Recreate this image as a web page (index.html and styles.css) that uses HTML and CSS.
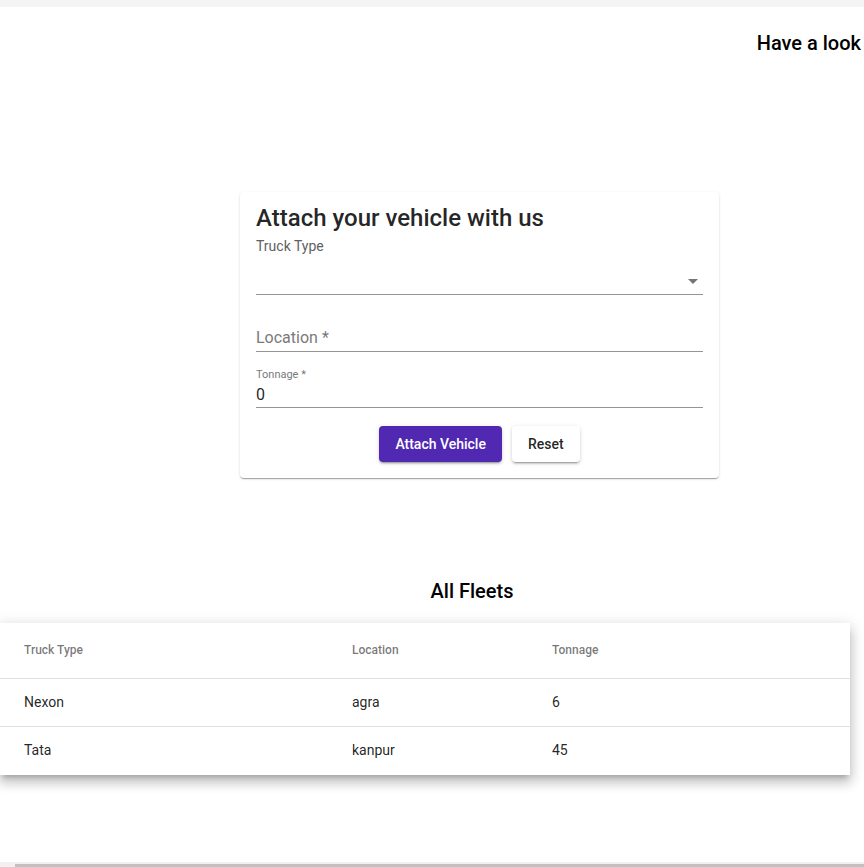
FILE: index.html
```html
<!DOCTYPE html>
<html lang="en">
<head>
<meta charset="utf-8">
<title>Fleets</title>
<link rel="stylesheet" href="styles.css">
</head>
<body>
<div class="page">
  <div class="topbar"></div>
  <h2 class="look">Have a look</h2>

  <form class="card">
    <h1 class="card-title">Attach your vehicle with us</h1>

    <div class="field select-field">
      <label class="select-label">Truck Type</label>
      <div class="select-box">
        <span class="select-value"></span>
        <span class="arrow"></span>
      </div>
    </div>

    <div class="field text-field">
      <span class="placeholder">Location *</span>
    </div>

    <div class="field float-field">
      <span class="float-label">Tonnage *</span>
      <span class="value">0</span>
    </div>

    <div class="actions">
      <button type="button" class="btn btn-primary">Attach Vehicle</button>
      <button type="button" class="btn btn-plain">Reset</button>
    </div>
  </form>

  <h2 class="fleets-title">All Fleets</h2>

  <div class="table">
    <div class="row head">
      <div>Truck Type</div>
      <div>Location</div>
      <div>Tonnage</div>
    </div>
    <div class="row">
      <div>Nexon</div>
      <div>agra</div>
      <div>6</div>
    </div>
    <div class="row">
      <div>Tata</div>
      <div>kanpur</div>
      <div>45</div>
    </div>
  </div>

  <div class="hscroll">
    <span class="hs-arrow"></span>
    <span class="hs-thumb"></span>
  </div>
</div>
</body>
</html>
```

FILE: styles.css
```css
html, body {
  margin: 0;
  padding: 0;
  height: 867px;
  overflow: hidden;
  background: #ffffff;
}

body {
  font-family: Roboto, "Liberation Sans", Arial, sans-serif;
  color: rgba(0, 0, 0, 0.87);
}

.page {
  display: flex;
  flex-direction: column;
  height: 867px;
}

.topbar {
  height: 7px;
  background: #f4f4f4;
  flex: none;
}

.look {
  margin: 20px 0 0 0;
  padding-right: 3px;
  text-align: right;
  font-size: 20px;
  line-height: 32px;
  font-weight: 500;
  color: #000;
  white-space: nowrap;
}

.card {
  margin: 133px 0 0 240px;
  width: 479px;
  box-sizing: border-box;
  padding: 16px;
  background: #fff;
  border-radius: 4px;
  box-shadow: 0 2px 1px -1px rgba(0,0,0,.2), 0 1px 1px 0 rgba(0,0,0,.14), 0 1px 3px 0 rgba(0,0,0,.12);
  display: flex;
  flex-direction: column;
}

.card-title {
  margin: 0;
  font-size: 24px;
  line-height: 20px;
  font-weight: 500;
  color: rgba(0, 0, 0, 0.87);
}

.field {
  border-bottom: 1px solid rgba(0, 0, 0, 0.42);
  display: flex;
  flex-direction: column;
}

.select-field {
  margin-top: 10px;
}

.select-label {
  font-size: 14px;
  line-height: 16px;
  color: #616161;
}

.select-box {
  height: 40px;
  display: flex;
  align-items: flex-start;
  justify-content: space-between;
}

.arrow {
  margin-top: 25px;
  margin-right: 5px;
  width: 0;
  height: 0;
  border-left: 5px solid transparent;
  border-right: 5px solid transparent;
  border-top: 5px solid #757575;
}

.text-field {
  padding-top: 33px;
  padding-bottom: 3px;
}

.placeholder {
  font-size: 16px;
  line-height: 20px;
  color: #7a7a7a;
}

.float-field {
  margin-top: 16px;
  padding-bottom: 2px;
}

.float-label {
  font-size: 11px;
  line-height: 13px;
  color: #7a7a7a;
}

.value {
  margin-top: 4px;
  font-size: 16px;
  line-height: 20px;
  color: rgba(0, 0, 0, 0.87);
}

.actions {
  margin-top: 18px;
  display: flex;
  justify-content: center;
  gap: 10px;
}

.btn {
  height: 36px;
  padding: 0 16px;
  border: none;
  border-radius: 4px;
  font-family: Roboto, "Liberation Sans", Arial, sans-serif;
  font-size: 14px;
  font-weight: 500;
  line-height: 36px;
  box-shadow: 0 3px 1px -2px rgba(0,0,0,.2), 0 2px 2px 0 rgba(0,0,0,.14), 0 1px 5px 0 rgba(0,0,0,.12);
}

.btn-primary {
  background: #5128b2;
  color: #fff;
}

.btn-plain {
  background: #fff;
  color: rgba(0, 0, 0, 0.87);
}

.fleets-title {
  margin: 97px 0 0 0;
  padding-left: 80px;
  text-align: center;
  font-size: 20px;
  line-height: 32px;
  font-weight: 500;
  color: #000;
}

.table {
  margin-top: 16px;
  width: 850px;
  background: #fff;
  box-shadow: 0 5px 5px -3px rgba(0,0,0,.2), 0 8px 10px 1px rgba(0,0,0,.14), 0 3px 14px 2px rgba(0,0,0,.12);
}

.row {
  display: grid;
  grid-template-columns: 328px 200px 1fr;
  padding: 0 24px 2px 24px;
  height: 48px;
  box-sizing: border-box;
  align-items: center;
  border-bottom: 1px solid rgba(0, 0, 0, 0.12);
  font-size: 14px;
  color: rgba(0, 0, 0, 0.87);
}

.row:last-child {
  border-bottom: none;
}

.row.head {
  height: 56px;
  font-size: 12px;
  font-weight: 500;
  color: rgba(0, 0, 0, 0.54);
}

.hscroll {
  margin-top: auto;
  height: 5px;
  background: #f1f1f1;
  display: flex;
  align-items: flex-end;
  flex: none;
}

.hs-arrow {
  width: 15px;
  height: 3px;
}

.hs-thumb {
  flex: 1;
  height: 3px;
  background: #c1c1c1;
}
```
